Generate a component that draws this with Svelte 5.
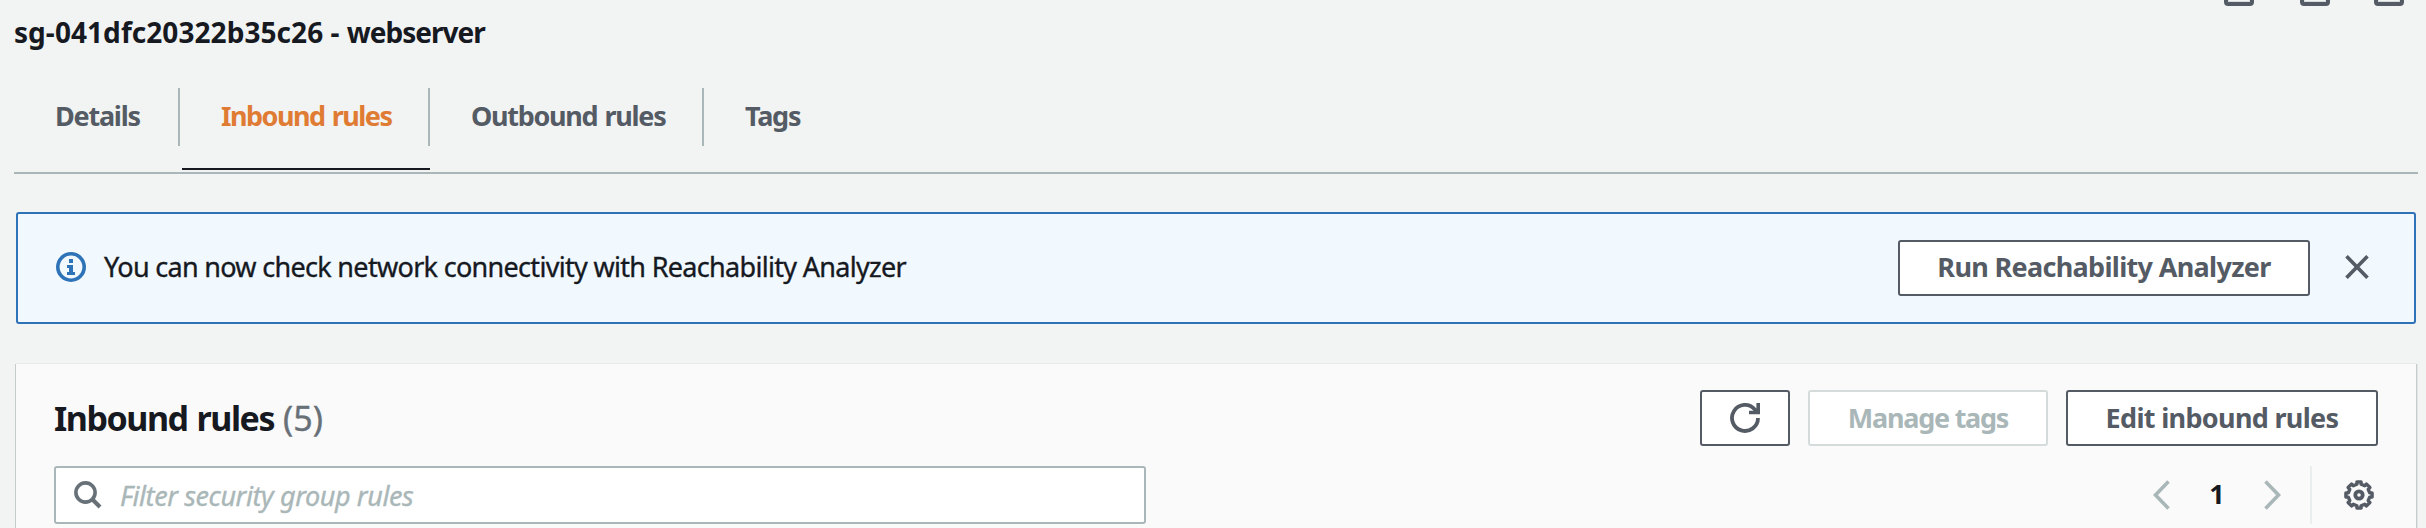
<script>
  const tabs = [
    { id: 'details', label: 'Details', width: 166, spacing: -1.23 },
    { id: 'inbound', label: 'Inbound rules', width: 250, spacing: -1.5 },
    { id: 'outbound', label: 'Outbound rules', width: 274, spacing: -1.3 },
    { id: 'tags', label: 'Tags', width: 140, spacing: -1.25 }
  ];
  let active = $state('inbound');
  let showNotice = $state(true);
</script>

<main class="page">
  <div class="corner" aria-hidden="true">
    <span></span><span></span><span></span>
  </div>

  <h1><span class="group-id">sg-041dfc20322b35c26</span> - <span class="group-name">webserver</span></h1>

  <nav class="tabs">
    {#each tabs as tab}
      <button
        class="tab"
        class:active={active === tab.id}
        style="width: {tab.width}px; letter-spacing: {tab.spacing}px"
        onclick={() => (active = tab.id)}
      ><span>{tab.label}</span></button>
    {/each}
  </nav>

  {#if showNotice}
    <section class="notice">
      <svg class="info" viewBox="0 0 30 30" width="30" height="30">
        <circle cx="15" cy="15" r="13.2" fill="none" stroke="#2e73b8" stroke-width="3.6" />
        <path fill="#2e73b8" d="M13 7h4v4h-4zM11 13h6v7h2v3h-8v-3h2v-4h-2z" />
      </svg>
      <p>You can now check network connectivity with Reachability Analyzer</p>
      <button class="btn run">Run Reachability Analyzer</button>
      <button class="close" aria-label="Dismiss" onclick={() => (showNotice = false)}>
        <svg viewBox="0 0 24 24" width="24" height="24">
          <path d="M1.5 1.2 22.5 22.8M22.5 1.2 1.5 22.8" fill="none" stroke="#545b64" stroke-width="3.6" />
        </svg>
      </button>
    </section>
  {/if}

  <section class="panel">
    <header class="panel-head">
      <h2><span class="name">Inbound rules</span><span class="count">(5)</span></h2>
      <div class="actions">
        <button class="btn refresh" aria-label="Refresh">
          <svg viewBox="0 0 30 30" width="30" height="30">
            <path d="M28 15A13 13 0 1 1 24.8 6.4L27.5 9.3" fill="none" stroke="#545b64" stroke-width="3.8" />
            <path d="M28.2 0V9.5H19" fill="none" stroke="#545b64" stroke-width="3.6" />
          </svg>
        </button>
        <button class="btn manage" disabled>Manage tags</button>
        <button class="btn edit">Edit inbound rules</button>
      </div>
    </header>

    <div class="toolbar">
      <label class="search">
        <svg viewBox="0 0 28 28" width="28" height="28">
          <circle cx="11.5" cy="11.5" r="9.6" fill="none" stroke="#687078" stroke-width="3.6" />
          <path d="m18 18 8 8" stroke="#687078" stroke-width="4" />
        </svg>
        <input type="text" placeholder="Filter security group rules" />
      </label>
      <div class="pager">
        <svg viewBox="0 0 17 30" width="17" height="30">
          <path d="M15.5 1.5 2.5 15l13 13.5" fill="none" stroke="#aab7b8" stroke-width="3.6" />
        </svg>
        <span class="current">1</span>
        <svg viewBox="0 0 17 30" width="17" height="30">
          <path d="m1.5 1.5 13 13.5-13 13.5" fill="none" stroke="#aab7b8" stroke-width="3.6" />
        </svg>
        <span class="rule"></span>
        <svg class="gear" viewBox="0 0 30 30" width="30" height="30">
          <path
            d="M12.9 1.9h4.2v2.4l3.6 1.5 1.8-1.7 3.4 3.4-1.7 1.8 1.5 3.6h2.4v4.2h-2.4l-1.5 3.6 1.7 1.8-3.4 3.4-1.8-1.7-3.6 1.5v2.4h-4.2v-2.4l-3.6-1.5-1.8 1.7-3.4-3.4 1.7-1.8-1.5-3.6H1.9v-4.2h2.4l1.5-3.6-1.7-1.8 3.4-3.4 1.8 1.7 3.6-1.5z"
            fill="none" stroke="#545b64" stroke-width="3.4" stroke-linejoin="round"
          />
          <circle cx="15" cy="15" r="3.7" fill="none" stroke="#545b64" stroke-width="3.8" />
        </svg>
      </div>
    </div>
  </section>
</main>

<style>
  :global(body) {
    background: #f2f3f3;
    overflow: hidden;
  }
  .page,
  .page * {
    box-sizing: border-box;
  }
  .page {
    position: relative;
    height: 528px;
    overflow: hidden;
    padding: 12px 8px 0 14px;
    font-family: 'Noto Sans', sans-serif;
    font-size: 27px;
    color: #16191f;
  }
  button,
  input {
    font: inherit;
    margin: 0;
  }
  svg {
    display: block;
    flex: none;
  }
  .corner {
    position: absolute;
    top: -24px;
    right: 22px;
    display: flex;
    gap: 44px;
  }
  .corner span {
    width: 30px;
    height: 30px;
    border: 4px solid #545b64;
    border-radius: 4px;
    box-shadow: inset 0 0 0 1px #d5dbdb;
  }
  .corner span:first-child {
    margin-right: 2px;
  }
  h1 {
    margin: 0;
    height: 40px;
    font-size: 28px;
    line-height: 40px;
    font-weight: 700;
    white-space: nowrap;
  }
  .group-id {
    letter-spacing: 0.06px;
  }
  .group-name {
    letter-spacing: -1px;
  }
  .tabs {
    display: flex;
    height: 122px;
    padding-top: 36px;
    border-bottom: 2px solid #aab7b8;
  }
  .tab {
    position: relative;
    height: 58px;
    padding: 0 0 3px 41px;
    border: 0;
    border-right: 2px solid #aab7b8;
    background: none;
    color: #545b64;
    font-weight: 700;
    text-align: left;
    white-space: nowrap;
    word-spacing: 1.5px;
  }
  .tab:last-child {
    border-right: 0;
  }
  .tab.active {
    color: #e07b34;
  }
  .tab.active::after {
    content: '';
    position: absolute;
    left: 2px;
    right: -2px;
    top: 80px;
    height: 2px;
    background: #16191f;
  }
  .notice {
    display: flex;
    align-items: center;
    height: 112px;
    margin: 38px 2px 0;
    padding: 0 45px 0 38px;
    border: 2px solid #2e73b8;
    border-radius: 3px;
    background: #f2f9fe;
  }
  .notice p {
    flex: 1;
    margin: 0 0 0 18px;
    padding-bottom: 4px;
    letter-spacing: -0.69px;
    white-space: nowrap;
    -webkit-text-stroke: 0.35px currentColor;
  }
  .info {
    position: relative;
    top: -1px;
  }
  .close {
    margin-left: 35px;
    padding: 0 0 2px;
    border: 0;
    background: none;
  }
  .btn {
    display: flex;
    align-items: center;
    justify-content: center;
    height: 56px;
    padding: 0 0 1px;
    border: 2px solid #545b64;
    border-radius: 3px;
    background: #fff;
    color: #545b64;
    font-weight: 700;
    white-space: nowrap;
  }
  .run {
    width: 412px;
    padding-bottom: 4px;
    letter-spacing: -0.68px;
  }
  .refresh {
    width: 90px;
  }
  .manage {
    width: 240px;
    border-color: #d5dbdb;
    color: #aab7b8;
    letter-spacing: -1.25px;
  }
  .edit {
    width: 312px;
    letter-spacing: -0.68px;
  }
  .panel {
    height: 200px;
    margin: 40px 2px 0;
    padding: 26px 38px 0;
    background: #fafafa;
    box-shadow:
      0 -1px 0 0 #e6eaea,
      -1px 0 0 0 #c3cbcb,
      1px 0 0 0 #c3cbcb,
      2px 0 0 0 #e2e6e6;
  }
  .panel-head {
    display: flex;
    align-items: center;
    justify-content: space-between;
    height: 56px;
  }
  h2 {
    display: flex;
    margin: 0;
    padding-bottom: 1px;
    font-size: 34px;
    line-height: 46px;
    white-space: nowrap;
  }
  .name {
    width: 229px;
    letter-spacing: -1.45px;
    word-spacing: 1.5px;
  }
  .count {
    color: #687078;
    font-weight: 400;
    -webkit-text-stroke: 0.35px currentColor;
  }
  .actions {
    display: flex;
    gap: 18px;
  }
  .toolbar {
    display: flex;
    align-items: center;
    justify-content: space-between;
    height: 58px;
    margin-top: 20px;
  }
  .search {
    display: flex;
    align-items: center;
    width: 1092px;
    height: 58px;
    padding-left: 18px;
    border: 2px solid #aab7b8;
    border-radius: 3px;
    background: #fff;
  }
  .search input {
    flex: 1;
    height: 50px;
    margin-left: 18px;
    padding: 1px 0 0;
    border: 0;
    outline: 0;
    background: none;
    letter-spacing: -0.4px;
  }
  .search input::placeholder {
    color: #aab7b8;
    font-style: italic;
    opacity: 1;
    -webkit-text-stroke: 0.35px currentColor;
  }
  .pager {
    display: flex;
    align-items: center;
    padding-right: 4px;
  }
  .current {
    width: 94px;
    padding-bottom: 3px;
    font-weight: 700;
    text-align: center;
  }
  .rule {
    width: 2px;
    height: 58px;
    margin: 0 32px 0 29px;
    background: #eaeded;
  }
</style>
